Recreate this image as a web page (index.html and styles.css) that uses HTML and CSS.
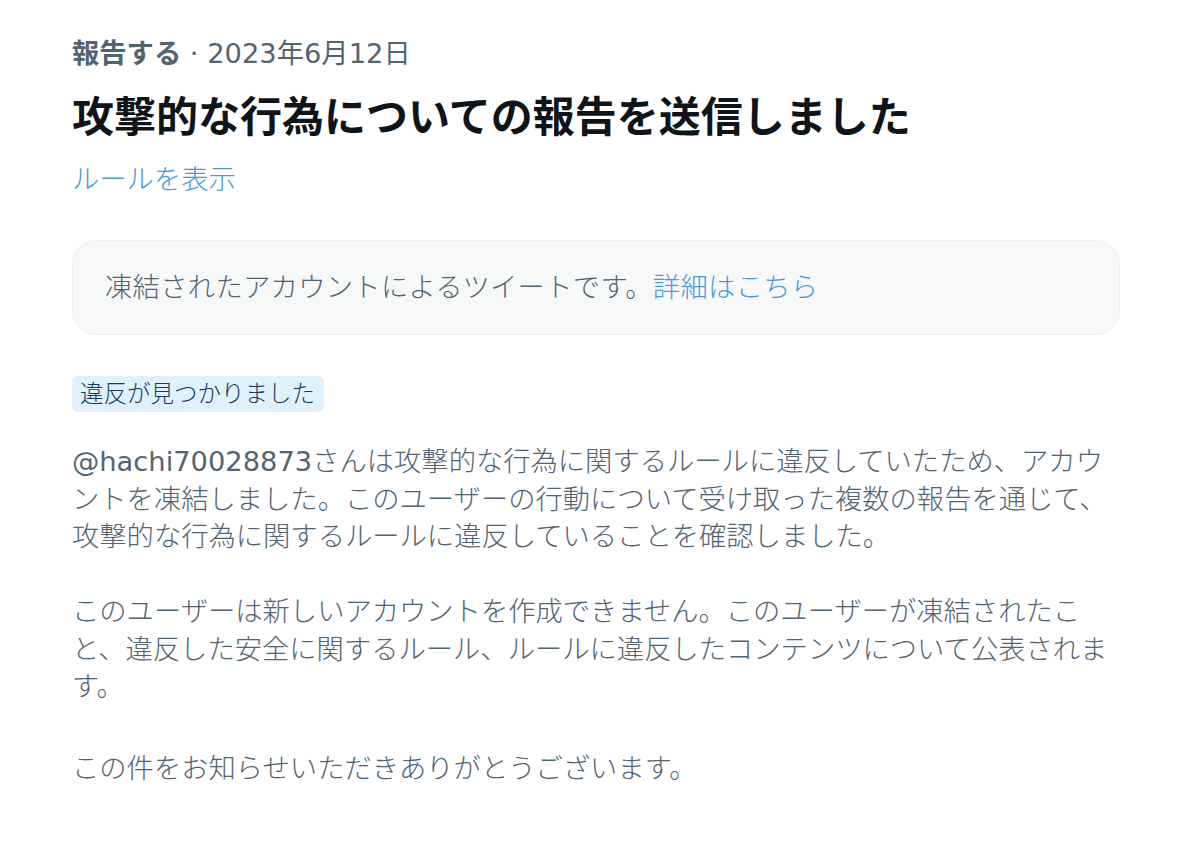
FILE: index.html
```html
<!DOCTYPE html>
<html lang="ja">
<head>
  <meta charset="utf-8">
  <title>報告する</title>
  <link rel="stylesheet" href="styles.css">
</head>
<body>
  <div class="report">
    <div class="meta"><span class="meta-kind">報告する</span> · 2023年6月12日</div>
    <h1 class="title">攻撃的な行為についての報告を送信しました</h1>
    <a class="link rules-link" href="#">ルールを表示</a>

    <div class="notice">
      凍結されたアカウントによるツイートです。<a class="link" href="#">詳細はこちら</a>
    </div>

    <div class="badge">違反が見つかりました</div>

    <div class="body">
      <p><span class="handle">@hachi70028873</span>さんは攻撃的な行為に関するルールに違反していたため、アカウントを凍結しました。このユーザーの行動について受け取った複数の報告を通じて、攻撃的な行為に関するルールに違反していることを確認しました。</p>
      <p>このユーザーは新しいアカウントを作成できません。このユーザーが凍結されたこと、違反した安全に関するルール、ルールに違反したコンテンツについて公表されます。</p>
      <p class="thanks">この件をお知らせいただきありがとうございます。</p>
    </div>
  </div>
</body>
</html>
```

FILE: styles.css
```css
html, body {
  margin: 0;
  background: #ffffff;
}

body {
  font-family: "DejaVu Sans", "Noto Sans CJK JP", sans-serif;
  color: #536471;
}

.report {
  width: 1048px;
  margin-left: 72px;
  padding-top: 36px;
}

.meta {
  font-size: 27.3px;
  line-height: 36px;
}

.meta-kind {
  font-weight: bold;
}

.title {
  margin: 18px 0 16px;
  font-size: 42px;
  line-height: 56px;
  font-weight: bold;
  color: #0f1419;
}

.link {
  color: #4a9ad9;
  text-decoration: none;
}

.rules-link {
  display: block;
  font-size: 27.3px;
  line-height: 36px;
  font-weight: 300;
}

.notice {
  margin-top: 42px;
  padding: 28px 32px;
  border: 1px solid #eef1f2;
  border-radius: 24px;
  background: #f7f9f9;
  font-size: 27.3px;
  line-height: 37px;
  font-weight: 300;
  letter-spacing: 0.3px;
}

.badge {
  display: inline-block;
  margin-top: 41px;
  padding: 3px 9px 3px 8px;
  border-radius: 6px;
  background: #dff1fb;
  color: #1a3a5c;
  font-size: 23.5px;
  line-height: 30px;
  font-weight: 300;
}

.body {
  margin-top: 31px;
  font-size: 27.3px;
  line-height: 37.5px;
  font-weight: 300;
}

.body p {
  margin: 0 0 37.5px;
}

.body .handle {
  font-weight: normal;
}

.body .thanks {
  margin-top: 44px;
}
```
